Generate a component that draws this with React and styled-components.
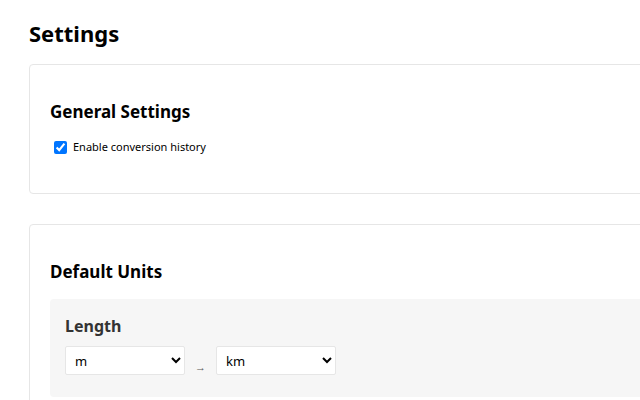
import React from 'react';
import styled, { createGlobalStyle } from 'styled-components';

const GlobalStyle = createGlobalStyle`
  html, body {
    margin: 0;
    background: #ffffff;
    overflow: hidden;
  }
  body {
    font-family: "Noto Sans", "Open Sans", Arial, sans-serif;
    color: #000000;
  }
`;

const Page = styled.div`
  padding: 17px 0 0 29px;
  width: 720px;
`;

const Title = styled.h1`
  font-size: 22px;
  font-weight: 700;
  margin: 0 0 15px;
  line-height: 32px;
`;

const Card = styled.section`
  border: 1px solid #e6e6e6;
  border-radius: 4px;
  padding: 35px 20px 38px;
  margin-bottom: 30px;
`;

const SectionTitle = styled.h2`
  font-size: 17px;
  font-weight: 700;
  margin: 0 0 15px;
  line-height: 24px;
`;

const CheckRow = styled.label`
  display: flex;
  align-items: center;
  gap: 6px;
  font-size: 11px;
  padding-left: 4px;
  margin-top: 3px;
  line-height: 16px;
`;

const Check = styled.input`
  margin: 0;
  width: 13px;
  height: 13px;
  accent-color: #0075ff;
`;

const UnitBox = styled.div`
  background: #f6f6f6;
  border-radius: 4px;
  padding: 16px 15px 22px;
`;

const UnitTitle = styled.h3`
  font-size: 16px;
  font-weight: 700;
  color: #333333;
  margin: 0 0 9px;
  line-height: 22px;
`;

const UnitRow = styled.div`
  display: flex;
  align-items: center;
  gap: 10px;
`;

const Select = styled.select`
  box-sizing: border-box;
  width: 120px;
  height: 29px;
  border: 1px solid #e6e6e6;
  border-radius: 2px;
  background: #ffffff;
  font-family: inherit;
  font-size: 13px;
  padding: 0 5px;
  color: #000;
`;

const Arrow = styled.span`
  font-size: 11px;
  color: #555555;
  padding-top: 12px;
`;

export default function App() {
  return (
    <>
      <GlobalStyle />
      <Page>
        <Title>Settings</Title>
        <Card>
          <SectionTitle>General Settings</SectionTitle>
          <CheckRow>
            <Check type="checkbox" defaultChecked />
            Enable conversion history
          </CheckRow>
        </Card>
        <Card>
          <SectionTitle>Default Units</SectionTitle>
          <UnitBox>
            <UnitTitle>Length</UnitTitle>
            <UnitRow>
              <Select defaultValue="m">
                <option value="m">m</option>
                <option value="km">km</option>
              </Select>
              <Arrow>→</Arrow>
              <Select defaultValue="km">
                <option value="m">m</option>
                <option value="km">km</option>
              </Select>
            </UnitRow>
          </UnitBox>
        </Card>
      </Page>
    </>
  );
}
